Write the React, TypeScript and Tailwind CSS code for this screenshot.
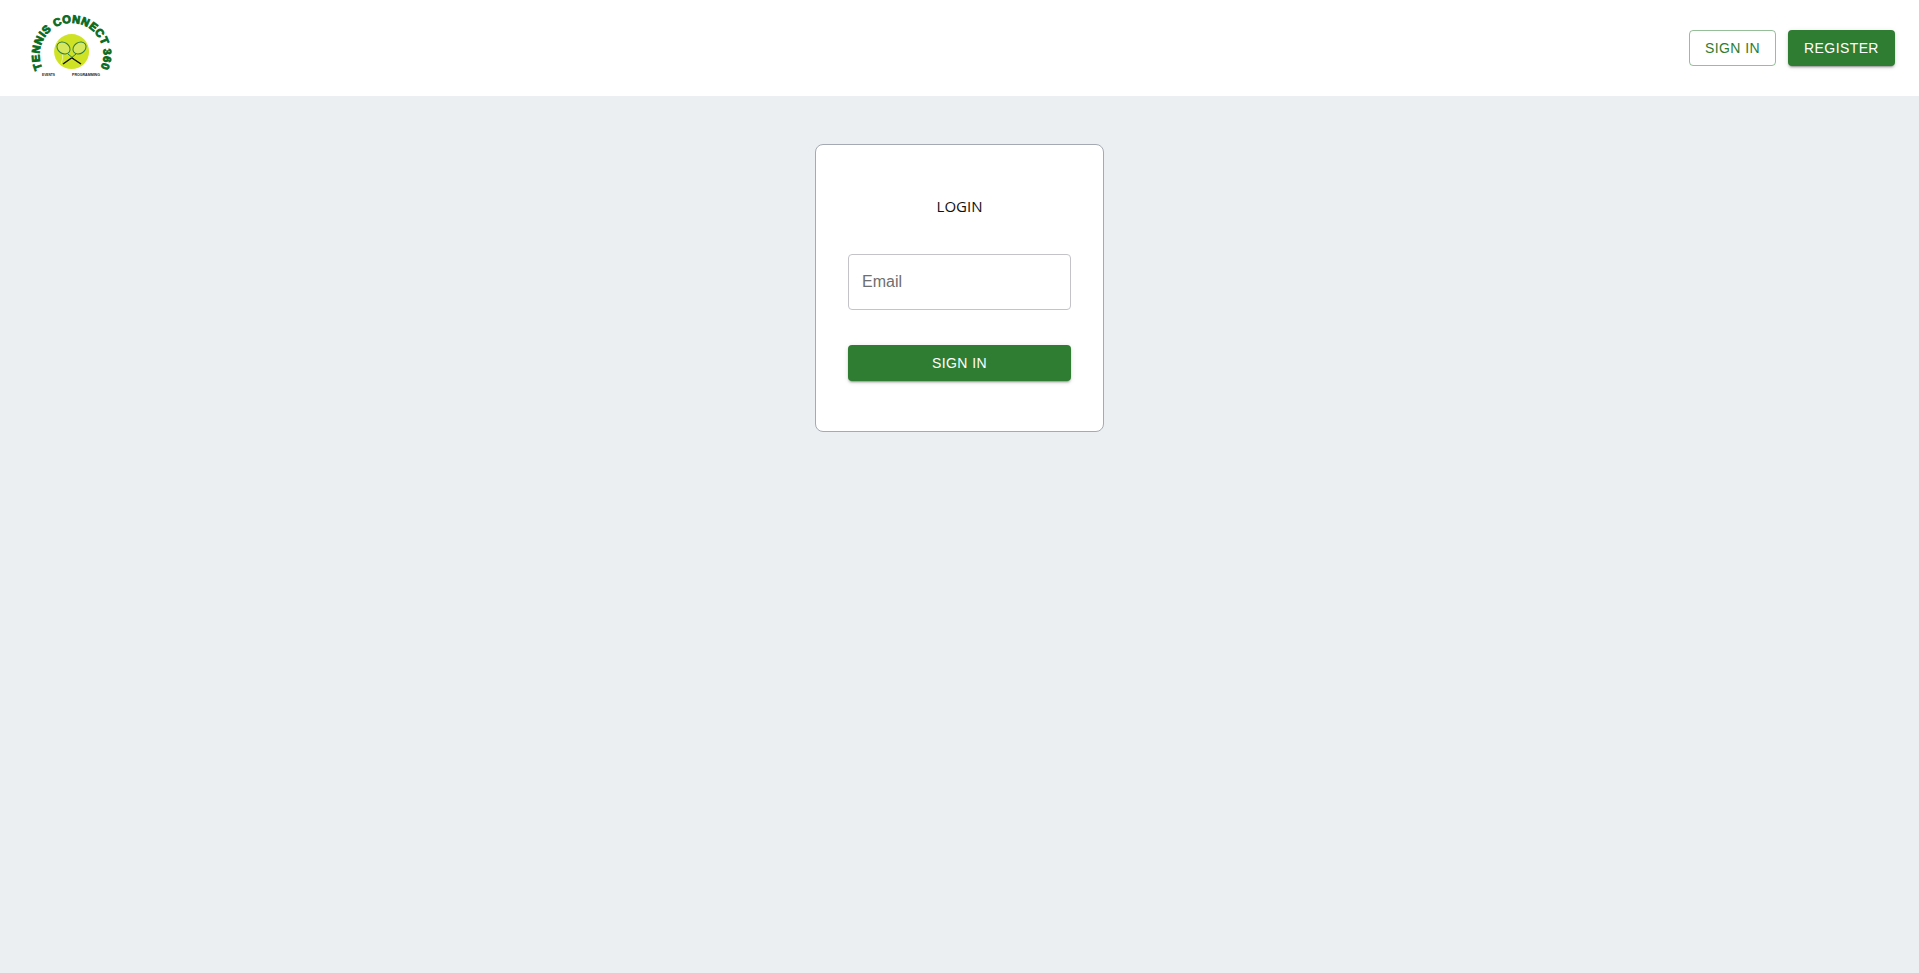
const Logo = () => (
  <svg width="90" height="80" viewBox="0 0 90 80" className="block">
    <defs>
      <path id="logo-arc" d="M 23 67.5 A 32 32 0 1 1 72 67.5" fill="none" />
    </defs>
    <text fill="#0b6b1e" fontFamily="'Liberation Sans', sans-serif" fontSize="11" fontWeight="700" stroke="#0b6b1e" strokeWidth="0.9" letterSpacing="0.5">
      <textPath href="#logo-arc" startOffset="50%" textAnchor="middle">
        TENNIS CONNECT 360
      </textPath>
    </text>
    <circle cx="47.6" cy="43.6" r="17.5" fill="#cfe324" />
    <path d="M33 34 Q42 44 37 56" fill="none" stroke="#e9f29a" strokeWidth="1" />
    <path d="M44 46 L50 51 M52 46 L46 51" stroke="#2e7d4a" strokeWidth="1" fill="none" />
    <ellipse cx="39.5" cy="40" rx="7" ry="5.5" fill="#d8e85c" stroke="#2e7d4a" strokeWidth="1" transform="rotate(35 39.5 40)" />
    <ellipse cx="55.5" cy="40" rx="7" ry="5.5" fill="#d8e85c" stroke="#2e7d4a" strokeWidth="1" transform="rotate(-35 55.5 40)" />
    <path d="M48 50 L57 56 M47.5 50 L39 56" stroke="#111" strokeWidth="1.5" fill="none" />
    <text x="18" y="68" fontFamily="'Liberation Sans', sans-serif" fontSize="2.8" fontWeight="700" fill="#222" textLength="13" lengthAdjust="spacingAndGlyphs">
      EVENTS
    </text>
    <text x="48" y="68" fontFamily="'Liberation Sans', sans-serif" fontSize="2.8" fontWeight="700" fill="#222" textLength="28" lengthAdjust="spacingAndGlyphs">
      PROGRAMMING
    </text>
  </svg>
);

const App = () => {
  return (
    <div className="min-h-[973px] bg-[#ebeff2] font-['Liberation_Sans',sans-serif]">
      <header className="flex h-24 items-center justify-between bg-white px-6">
        <Logo />
        <div className="flex items-center gap-3">
          <button className="h-9 w-[87px] rounded border border-[#2e7d3280] text-sm tracking-[0.4px] text-[#2e7d32]">
            SIGN IN
          </button>
          <button className="h-9 w-[107px] rounded bg-[#2e7d32] text-sm tracking-[0.4px] text-white shadow-[0_3px_1px_-2px_rgba(0,0,0,0.2),0_2px_2px_0_rgba(0,0,0,0.14),0_1px_5px_0_rgba(0,0,0,0.12)]">
            REGISTER
          </button>
        </div>
      </header>
      <main className="flex justify-center pt-12">
        <div className="h-[288px] w-[289px] rounded-lg border border-[#a5a9b3] bg-white px-[32px]">
          <h1 className="mt-[49px] text-center font-['Open_Sans',sans-serif] text-[15px] leading-6 text-[#111]">
            LOGIN
          </h1>
          <input
            type="email"
            placeholder="Email"
            className="mt-[36px] block h-14 w-full rounded border border-[#c4c4c8] px-[13px] pb-px text-base text-[#333] placeholder:text-[#6f6f6f] outline-none"
          />
          <button className="mt-[35px] block h-9 w-full rounded bg-[#2e7d32] text-sm tracking-[0.4px] text-white shadow-[0_3px_1px_-2px_rgba(0,0,0,0.2),0_2px_2px_0_rgba(0,0,0,0.14),0_1px_5px_0_rgba(0,0,0,0.12)]">
            SIGN IN
          </button>
        </div>
      </main>
    </div>
  );
};

export default App;
